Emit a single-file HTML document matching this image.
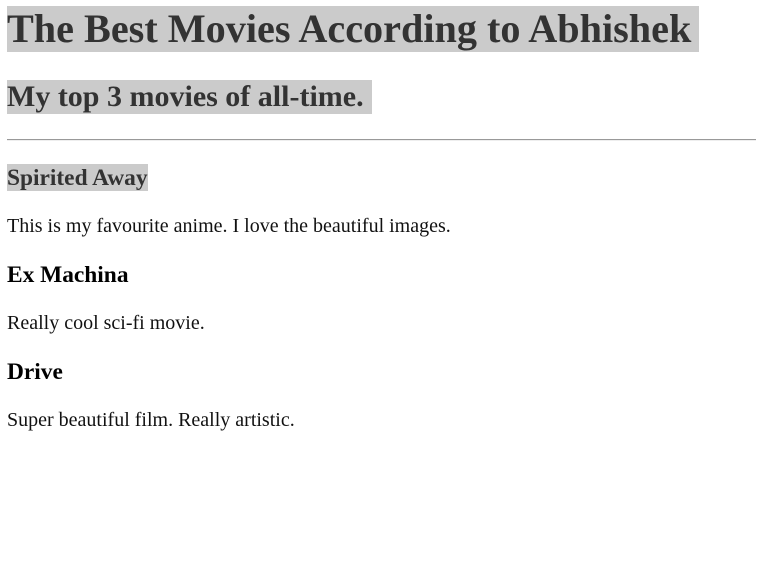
<!DOCTYPE html>
<html><head><meta charset="utf-8"><style>
html,body{margin:0;padding:0;background:#fff;width:766px;height:583px;overflow:hidden}
body{font-family:"Liberation Serif",serif;position:relative}
.a{position:absolute;left:7px;margin:0;white-space:nowrap}
.bg{background:#cbcbcb;color:#333;}
h1{font-size:40.2px;line-height:46px;top:6px;padding-right:8px}
h2{font-size:30px;line-height:34px;top:80px;padding-right:8px}
h3{font-size:23.4px;line-height:27px}
p{font-size:20px;line-height:22px;color:#111}
hr{position:absolute;left:7px;top:139px;width:749px;margin:0;border:0;border-top:1px solid #999;border-bottom:1px solid #eee;height:0}
</style></head><body>
<h1 class="a bg">The Best Movies According to Abhishek</h1>
<h2 class="a bg">My top 3 movies of all-time.</h2>
<hr>
<h3 class="a bg" style="top:164px;line-height:28px;height:27px">Spirited Away</h3>
<p class="a" style="top:215px">This is my favourite anime. I love the beautiful images.</p>
<h3 class="a" style="top:262px;color:#000">Ex Machina</h3>
<p class="a" style="top:312px">Really cool sci-fi movie.</p>
<h3 class="a" style="top:359px;color:#000">Drive</h3>
<p class="a" style="top:409px">Super beautiful film. Really artistic.</p>
</body></html>
